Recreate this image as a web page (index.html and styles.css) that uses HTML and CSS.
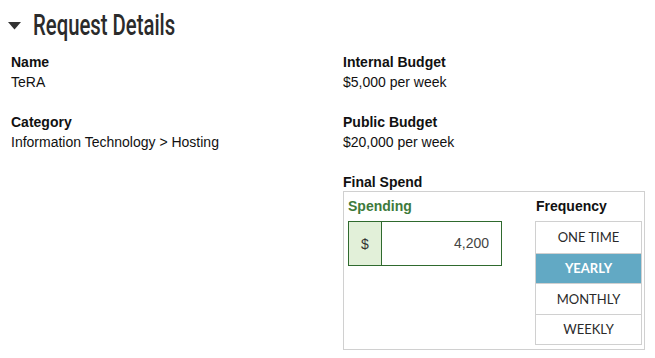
FILE: index.html
```html
<!DOCTYPE html>
<html lang="en">
<head>
  <meta charset="UTF-8">
  <title>Request Details</title>
  <link rel="stylesheet" href="styles.css">
</head>
<body>
  <div class="panel">
    <h2 class="panel-title">
      <svg class="caret" width="13" height="8" viewBox="0 0 13 8"><path d="M0 0H13L6.5 7.5Z" fill="#333"/></svg>
      <span class="title-text">Request Details</span>
    </h2>

    <div class="details">
      <div class="col">
        <div class="field">
          <div class="label">Name</div>
          <div class="value">TeRA</div>
        </div>
        <div class="field">
          <div class="label">Category</div>
          <div class="value">Information Technology &gt; Hosting</div>
        </div>
      </div>

      <div class="col">
        <div class="field">
          <div class="label">Internal Budget</div>
          <div class="value">$5,000 per week</div>
        </div>
        <div class="field">
          <div class="label">Public Budget</div>
          <div class="value">$20,000 per week</div>
        </div>
        <div class="field">
          <div class="label">Final Spend</div>
          <div class="spend-box">
            <div class="spending">
              <div class="spend-label">Spending</div>
              <div class="input-group">
                <span class="addon">$</span>
                <input class="amount" type="text" value="4,200">
              </div>
            </div>
            <div class="frequency">
              <div class="freq-label">Frequency</div>
              <ul class="freq-list">
                <li>ONE TIME</li>
                <li class="active">YEARLY</li>
                <li>MONTHLY</li>
                <li>WEEKLY</li>
              </ul>
            </div>
          </div>
        </div>
      </div>
    </div>
  </div>
</body>
</html>
```

FILE: styles.css
```css
* {
  box-sizing: border-box;
}

body {
  margin: 0;
  background: #fff;
  color: #111;
  font-family: 'Liberation Sans', Arial, sans-serif;
  font-size: 14px;
}

.panel {
  padding: 0 10px 0 8px;
}

.panel-title {
  display: flex;
  align-items: center;
  gap: 12px;
  margin: 0;
  height: 48px;
  padding-top: 1px;
  font-family: Roboto, sans-serif;
  font-weight: 500;
  font-size: 29px;
  color: #2b2b2b;
}

.title-text {
  display: inline-block;
  transform: scaleX(0.7);
  transform-origin: left center;
}

.caret {
  margin-top: 2px;
}

.details {
  display: grid;
  grid-template-columns: 332px 1fr;
  padding-left: 3px;
  padding-top: 4px;
}

.field {
  margin-bottom: 20px;
  line-height: 20px;
}

.label {
  font-weight: bold;
}

.spend-box {
  display: flex;
  border: 1px solid #d0d0d0;
  padding: 3px 2px 4px 4px;
  margin-top: -1px;
}

.spending {
  flex: 1;
}

.spend-label {
  color: #3d7a3b;
  font-weight: bold;
  height: 26px;
  line-height: 22px;
}

.input-group {
  display: flex;
  width: 154px;
  height: 45px;
  border: 1px solid #2f6a2e;
}

.addon {
  width: 33px;
  background: #e2f0d9;
  border-right: 1px solid #2f6a2e;
  display: flex;
  align-items: center;
  justify-content: center;
  color: #333;
}

.amount {
  flex: 1;
  min-width: 0;
  border: none;
  outline: none;
  font: inherit;
  color: #444;
  text-align: right;
  padding: 0 12px 2px 0;
}

.frequency {
  width: 107px;
}

.freq-label {
  font-weight: bold;
  height: 26px;
  line-height: 22px;
  padding-left: 1px;
}

.freq-list {
  list-style: none;
  margin: 0;
  padding: 0;
  border: 1px solid #d0d0d0;
}

.freq-list li {
  height: 30.5px;
  display: flex;
  align-items: center;
  justify-content: center;
  font-family: Lato, sans-serif;
  font-size: 13px;
  color: #2a2a2a;
  border-top: 1px solid #d0d0d0;
}

.freq-list li:first-child {
  border-top: none;
}

.freq-list li.active {
  background: #62a9c4;
  color: #fff;
  font-weight: bold;
}
```
